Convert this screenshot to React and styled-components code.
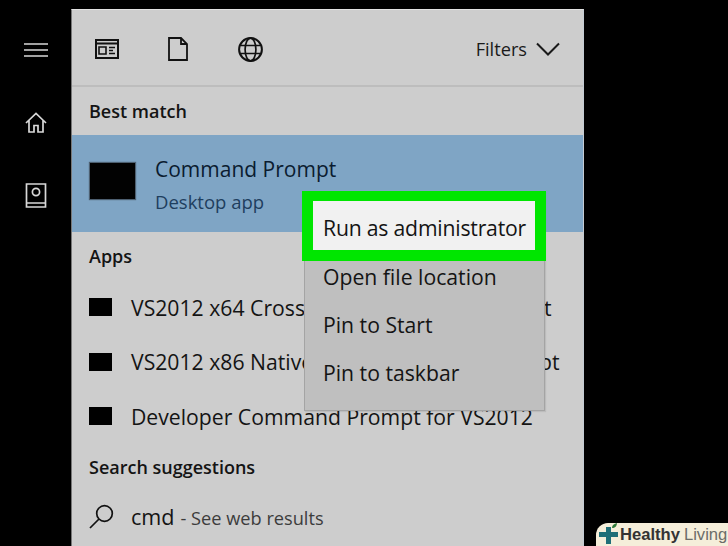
import React from "react";
import styled, { createGlobalStyle } from "styled-components";

const Global = createGlobalStyle`
  html, body {
    margin: 0;
    height: 546px;
    overflow: hidden;
    background: #000;
    font-family: "Open Sans", "Noto Sans", sans-serif;
  }
`;

const Screen = styled.div`
  display: flex;
  width: 728px;
  height: 546px;
  background: #000;
  position: relative;
  overflow: hidden;
`;

const Rail = styled.nav`
  width: 71px;
  flex: none;
  display: flex;
  flex-direction: column;
  align-items: center;
  padding-top: 43px;
  box-sizing: border-box;
`;

const RailIcon = styled.svg`
  display: block;
  margin-bottom: ${(p) => p.$gap}px;
  fill: none;
  stroke: #d8d8d8;
  stroke-width: 1.7;
`;

const Panel = styled.main`
  width: 513px;
  height: 537px;
  margin-top: 9px;
  flex: none;
  background: #cdcdcd;
  border-top: 1px solid #e2e2e2;
  border-right: 1px solid #c4ccd4;
  border-left: 1px solid #777;
  box-sizing: border-box;
  position: relative;
  color: #111;
  overflow: hidden;
`;

const Toolbar = styled.header`
  height: 77px;
  display: flex;
  align-items: center;
  border-bottom: 2px solid #bdbdbd;
  box-sizing: border-box;
  padding: 3px 23px 0 23px;
`;

const ToolIcon = styled.svg`
  display: block;
  margin-right: ${(p) => p.$gap}px;
  fill: none;
  stroke: #111;
  stroke-width: 2;
`;

const Filters = styled.div`
  margin-left: auto;
  display: flex;
  align-items: center;
  gap: 9px;
  font-size: 18.2px;
  color: #1a1a1a;
`;

const SectionTitle = styled.h2`
  margin: 0;
  height: 48px;
  display: flex;
  align-items: center;
  padding-left: 17px;
  font-size: 18px;
  font-weight: 600;
  color: #141414;
`;

const BestMatch = styled.section`
  height: 97px;
  background: #7fa5c5;
  display: flex;
  align-items: center;
  padding-left: 18px;
  gap: 20px;
`;

const AppTile = styled.div`
  width: 45px;
  height: 36px;
  background: #020202;
  box-shadow: 0 0 1px 1px #4d5f70;
  flex: none;
  margin-top: -5px;
`;

const MatchText = styled.div`
  display: flex;
  flex-direction: column;
  gap: 5px;
  margin-top: 0;
`;

const MatchName = styled.div`
  font-size: 21px;
  line-height: 30px;
  color: #0b1c30;
  white-space: nowrap;
`;

const MatchType = styled.div`
  font-size: 18.5px;
  line-height: 25px;
  color: #1e3e5e;
`;

const AppRow = styled.div`
  height: ${(p) => p.$h}px;
  display: flex;
  align-items: center;
  padding-left: 17px;
  gap: 19px;
  font-size: 21.2px;
  color: #141414;
  white-space: nowrap;
`;

const AppSquare = styled.span`
  width: 23px;
  height: 18px;
  background: #000;
  flex: none;
`;

const SuggestRow = styled.div`
  height: 55px;
  display: flex;
  align-items: center;
  padding: 0 0 4px 17px;
  box-sizing: border-box;
  gap: 17px;
  white-space: nowrap;
`;

const SearchIcon = styled.svg`
  flex: none;
  display: block;
  fill: none;
  stroke: #111;
  stroke-width: 1.7;
`;

const Query = styled.span`
  font-size: 21.6px;
  color: #141414;
`;

const Hint = styled.span`
  font-size: 18.2px;
  color: #3c3c3c;
  margin-left: 6px;
`;

const ContextMenu = styled.ul`
  position: absolute;
  left: 232px;
  top: 181px;
  width: 241px;
  height: 220px;
  margin: 0;
  padding: 0;
  list-style: none;
  background: #bfbfbf;
  border: 1px solid #a4a4a4;
  box-sizing: border-box;
  box-shadow: 1px 1px 1px rgba(0, 0, 0, 0.08);
`;

const MenuItem = styled.li`
  height: 48px;
  display: flex;
  align-items: center;
  padding-left: 18px;
  font-size: 21.2px;
  color: #141414;
  white-space: nowrap;
`;

// green annotation box drawn round the first entry, it hangs over the next item's top
const Highlight = styled.li`
  height: 70px;
  margin: -1px -2px -9px -3px;
  border-style: solid;
  border-color: #00e600;
  border-width: 10px 11px 11px 11px;
  background: #f1f1f1;
  box-sizing: border-box;
  display: flex;
  align-items: center;
  padding: 3px 0 0 10px;
  font-size: 21.2px;
  letter-spacing: -0.2px;
  color: #141414;
  white-space: nowrap;
  position: relative;
`;

const Watermark = styled.div`
  position: absolute;
  right: 0;
  bottom: 0;
  width: 132px;
  height: 23px;
  background: #f5eeda;
  border-top-left-radius: 12px;
  display: flex;
  align-items: center;
  padding-left: 2px;
  box-sizing: border-box;
  font-family: "Liberation Sans", Arial, sans-serif;
  font-size: 16.6px;
  white-space: nowrap;
`;

const Healthy = styled.b`
  color: #333;
`;

const Living = styled.span`
  color: #6c6c68;
  margin-left: 4px;
`;

const MENU = ["Open file location", "Pin to Start", "Pin to taskbar"];

const APPS = [
  { name: "VS2012 x64 Cross Tools Command Prompt", h: 54 },
  { name: "VS2012 x86 Native Tools Command Prompt", h: 55 },
  { name: "Developer Command Prompt for VS2012", h: 54 },
];

const App = () => (
  <Screen>
    <Global />
    <Rail>
      <RailIcon $gap={55} width="24" height="14" viewBox="0 0 24 14">
        <path d="M0 1h24M0 7h24M0 13h24" />
      </RailIcon>
      <RailIcon $gap={50} width="22" height="21" viewBox="0 0 22 21">
        <path d="M1 11 11 1.5 21 11M4 8.5V20h5v-6.5h4V20h5V8.5" />
      </RailIcon>
      <RailIcon width="22" height="25" viewBox="0 0 22 25">
        <path d="M1.5 1h19v23h-19zM1.5 20h19" />
        <circle cx="11" cy="9" r="3.6" />
      </RailIcon>
    </Rail>

    <Panel>
      <Toolbar>
        <ToolIcon $gap={49} width="24" height="20" viewBox="0 0 24 20">
          <path d="M1 1h22v18H1zM1 4.5h22" />
          <path d="M4 8h7v7H4zM14 8.5h6M14 11.5h4M14 14.5h6" strokeWidth="1.6" />
        </ToolIcon>
        <ToolIcon $gap={50} width="20" height="24" viewBox="0 0 20 24">
          <path d="M1 1h12l6 6v16H1zM13 1v6h6" strokeWidth="1.8" />
        </ToolIcon>
        <ToolIcon width="25" height="25" viewBox="0 0 25 25">
          <circle cx="12.5" cy="12.5" r="11.4" />
          <ellipse cx="12.5" cy="12.5" rx="5.4" ry="11.4" strokeWidth="1.7" />
          <path d="M2 8.5h21M2 16.5h21" strokeWidth="1.7" />
        </ToolIcon>
        <Filters>
          Filters
          <svg width="24" height="14" viewBox="0 0 24 14" fill="none" stroke="#1a1a1a" strokeWidth="2">
            <path d="M1 1.5 12 12.5 23 1.5" />
          </svg>
        </Filters>
      </Toolbar>

      <SectionTitle>Best match</SectionTitle>
      <BestMatch>
        <AppTile />
        <MatchText>
          <MatchName>Command Prompt</MatchName>
          <MatchType>Desktop app</MatchType>
        </MatchText>
      </BestMatch>

      <SectionTitle>Apps</SectionTitle>
      {APPS.map((a) => (
        <AppRow key={a.name} $h={a.h}>
          <AppSquare />
          {a.name}
        </AppRow>
      ))}

      <SectionTitle>Search suggestions</SectionTitle>
      <SuggestRow>
        <SearchIcon width="25" height="25" viewBox="0 0 25 25">
          <circle cx="15.5" cy="9.5" r="7.8" />
          <path d="M10 15 1 24" />
        </SearchIcon>
        <span>
          <Query>cmd</Query>
          <Hint>- See web results</Hint>
        </span>
      </SuggestRow>

      <ContextMenu>
        <Highlight>Run as administrator</Highlight>
        {MENU.map((m) => (
          <MenuItem key={m}>{m}</MenuItem>
        ))}
      </ContextMenu>
    </Panel>

    <Watermark>
      <svg width="22" height="23" viewBox="0 0 22 23" style={{ flex: "none" }}>
        <path d="M8 7V4h5v5h7v5h-7v7H8v-7H1V9h7z" fill="#1f6f78" />
        <path d="M14 5c0-3 2-4 5-5 0 3-2 5-5 5z" fill="#2f7a3a" />
      </svg>
      <Healthy>Healthy</Healthy>
      <Living>Living</Living>
    </Watermark>
  </Screen>
);

export default App;
